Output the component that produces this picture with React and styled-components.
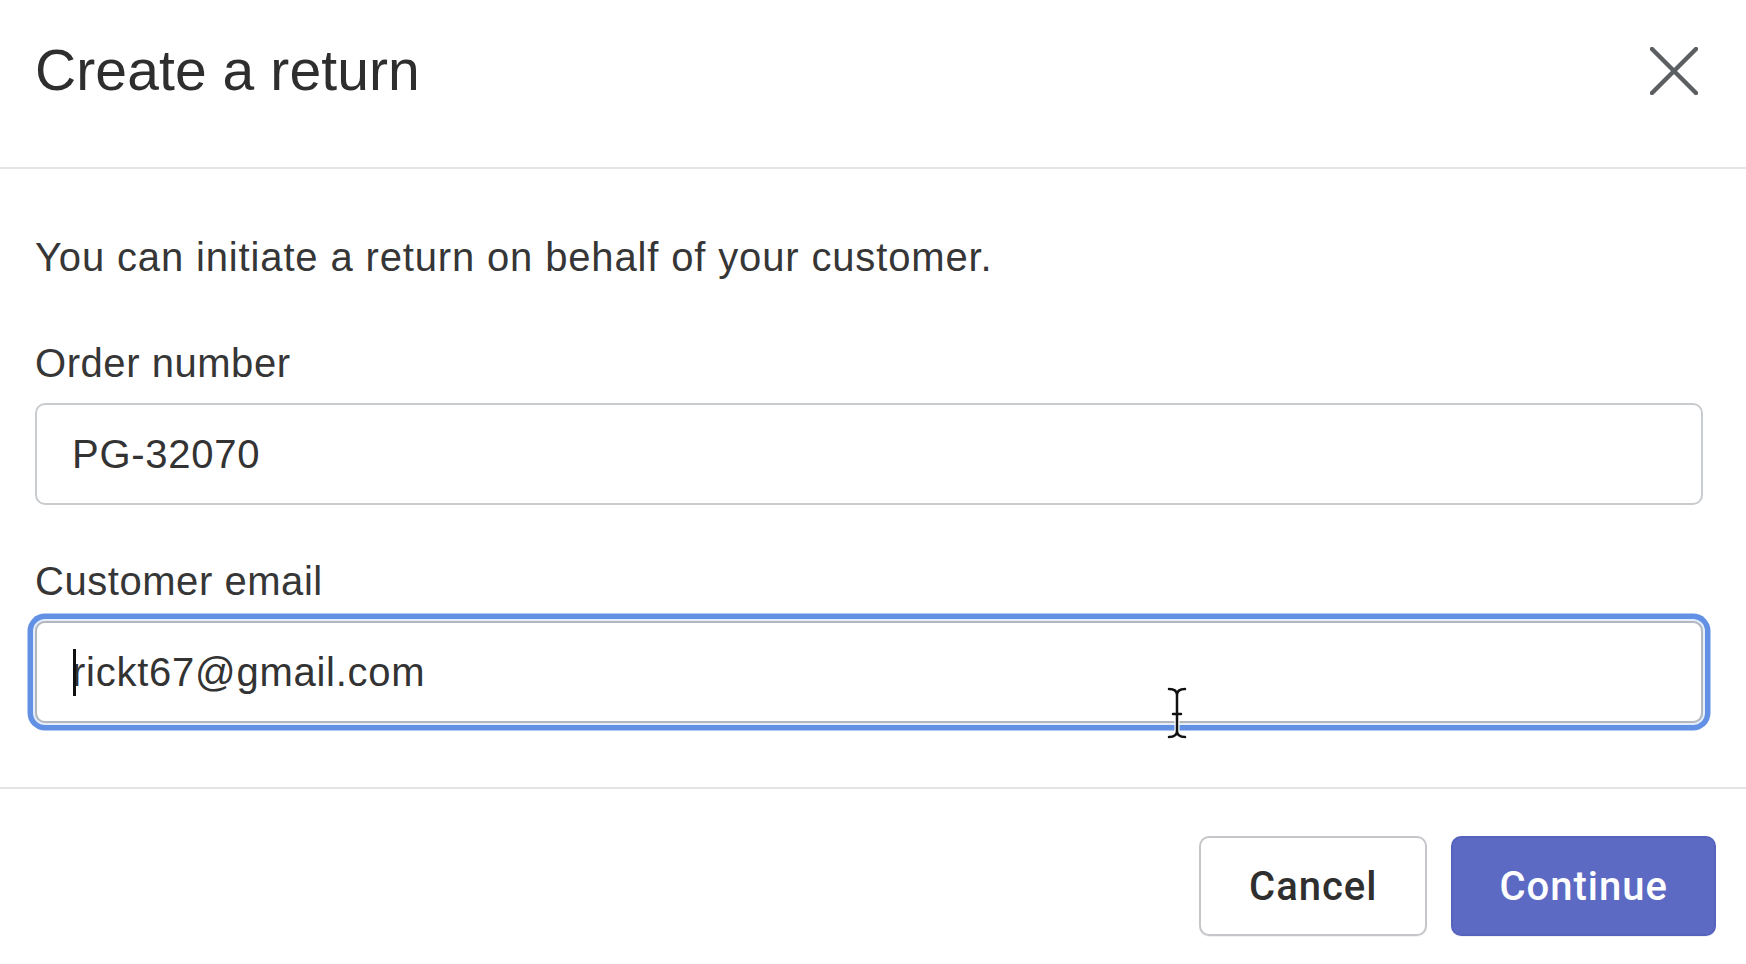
import React from "react";
import styled, { createGlobalStyle } from "styled-components";

const GlobalStyle = createGlobalStyle`
  html, body {
    margin: 0;
    padding: 0;
    background: #ffffff;
  }
  body {
    font-family: "Liberation Sans", Arial, sans-serif;
    color: #303030;
  }
  * { box-sizing: border-box; }
`;

const Modal = styled.div`
  display: flex;
  flex-direction: column;
  width: 100%;
  min-height: 964px;
  background: #fff;
`;

const Header = styled.header`
  display: flex;
  align-items: center;
  justify-content: space-between;
  padding: 42px 48px 68px 35px;
  border-bottom: 2px solid #e3e4e6;
`;

const Title = styled.h2`
  margin: 0;
  font-size: 57px;
  line-height: 57px;
  font-weight: 400;
  letter-spacing: 0.1px;
  color: #2e2e2e;
`;

const CloseButton = styled.button`
  display: flex;
  align-items: center;
  justify-content: center;
  width: 48px;
  height: 48px;
  padding: 0;
  border: none;
  background: transparent;
  color: #5c5f62;
  cursor: pointer;
`;

const Body = styled.section`
  display: flex;
  flex-direction: column;
  padding: 64px 43px 64px 35px;
  border-bottom: 2px solid #e3e4e6;
`;

const Intro = styled.p`
  margin: 0;
  font-size: 40px;
  line-height: 48px;
  letter-spacing: 0.85px;
  color: #363636;
`;

const Field = styled.div`
  display: flex;
  flex-direction: column;
  gap: 16px;
  margin-top: ${(p) => p.$top}px;
`;

const Label = styled.label`
  font-size: 40px;
  line-height: 48px;
  letter-spacing: 0.55px;
  color: #363636;
`;

const InputWrap = styled.div`
  position: relative;
  border-radius: 10px;
  box-shadow: ${(p) =>
    p.$focused ? "0 0 0 2px #e4edfc, 0 0 0 7.5px #6290e4" : "none"};
`;

const Input = styled.input`
  display: block;
  width: 100%;
  height: 102px;
  padding: 0 35px;
  border: 2px solid ${(p) => (p.$focused ? "#b4b8bd" : "#c9cccf")};
  border-radius: 10px;
  background: #fff;
  font-family: "Liberation Sans", Arial, sans-serif;
  font-size: 40px;
  letter-spacing: 0.75px;
  color: #333;
  outline: none;
  caret-color: transparent;
`;

const Caret = styled.span`
  position: absolute;
  left: 38px;
  top: 28px;
  width: 3px;
  height: 47px;
  background: #111;
`;

const IBeam = styled.svg`
  position: absolute;
  left: 1131px;
  top: 65px;
  width: 22px;
  height: 54px;
  pointer-events: none;
`;

const Footer = styled.footer`
  display: flex;
  justify-content: flex-end;
  gap: 24px;
  padding: 47px 30px 30px 35px;
`;

const Button = styled.button`
  height: 100px;
  padding: 0 ${(p) => (p.$primary ? 46 : 48)}px;
  border-radius: 10px;
  font-family: Roboto, "Liberation Sans", Arial, sans-serif;
  font-size: 40px;
  font-weight: 500;
  letter-spacing: 1px;
  cursor: pointer;
  border: 2px solid ${(p) => (p.$primary ? "#5563bd" : "#c4c6c9")};
  background: ${(p) => (p.$primary ? "#5c6ac4" : "#ffffff")};
  color: ${(p) => (p.$primary ? "#ffffff" : "#2f2f2f")};
  box-shadow: 0 1px 0 rgba(0, 0, 0, 0.05);
`;

const beamPath =
  "M3 3 Q11 3 11 9 Q11 3 19 3 M11 9 V45 M3 51 Q11 51 11 45 Q11 51 19 51 M7 28 H15";

export default function App() {
  return (
    <>
      <GlobalStyle />
      <Modal>
        <Header>
          <Title>Create a return</Title>
          <CloseButton aria-label="Close">
            <svg width="48" height="48" viewBox="0 0 48 48">
              <path
                d="M2 2 L46 46 M46 2 L2 46"
                stroke="currentColor"
                strokeWidth="4.5"
                strokeLinecap="round"
                fill="none"
              />
            </svg>
          </CloseButton>
        </Header>
        <Body>
          <Intro>You can initiate a return on behalf of your customer.</Intro>
          <Field $top={58}>
            <Label htmlFor="order">Order number</Label>
            <InputWrap>
              <Input id="order" defaultValue="PG-32070" readOnly />
            </InputWrap>
          </Field>
          <Field $top={52}>
            <Label htmlFor="email">Customer email</Label>
            <InputWrap $focused>
              <Input
                id="email"
                $focused
                defaultValue="rickt67@gmail.com"
                readOnly
              />
              <Caret />
              <IBeam viewBox="0 0 22 54">
                <g fill="none" strokeLinecap="round">
                  <path d={beamPath} stroke="#ffffff" strokeWidth="5" />
                  <path d={beamPath} stroke="#111111" strokeWidth="2.5" />
                </g>
              </IBeam>
            </InputWrap>
          </Field>
        </Body>
        <Footer>
          <Button>Cancel</Button>
          <Button $primary>Continue</Button>
        </Footer>
      </Modal>
    </>
  );
}
